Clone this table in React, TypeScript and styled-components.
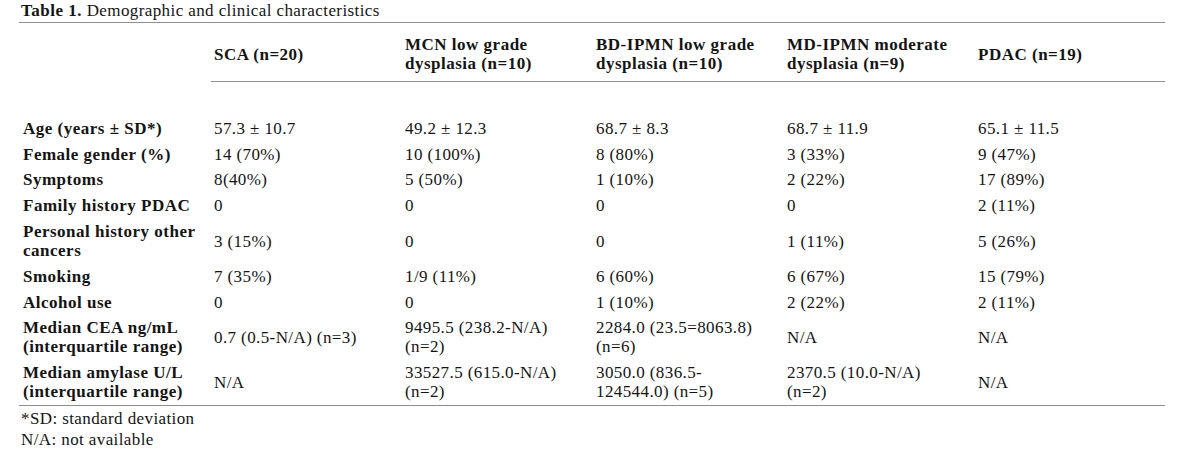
import styled, { createGlobalStyle } from "styled-components";

type CellValue = string | string[];

interface RowType {
  label: CellValue;
  values: CellValue[];
}

const columns: CellValue[] = [
  "SCA (n=20)",
  ["MCN low grade", "dysplasia (n=10)"],
  ["BD-IPMN low grade", "dysplasia (n=10)"],
  ["MD-IPMN moderate", "dysplasia (n=9)"],
  "PDAC (n=19)",
];

const rows: RowType[] = [
  {
    label: "Age (years ± SD*)",
    values: ["57.3 ± 10.7", "49.2 ± 12.3", "68.7 ± 8.3", "68.7 ± 11.9", "65.1 ± 11.5"],
  },
  {
    label: "Female gender (%)",
    values: ["14 (70%)", "10 (100%)", "8 (80%)", "3 (33%)", "9 (47%)"],
  },
  {
    label: "Symptoms",
    values: ["8(40%)", "5 (50%)", "1 (10%)", "2 (22%)", "17 (89%)"],
  },
  {
    label: "Family history PDAC",
    values: ["0", "0", "0", "0", "2 (11%)"],
  },
  {
    label: ["Personal history other", "cancers"],
    values: ["3 (15%)", "0", "0", "1 (11%)", "5 (26%)"],
  },
  {
    label: "Smoking",
    values: ["7 (35%)", "1/9 (11%)", "6 (60%)", "6 (67%)", "15 (79%)"],
  },
  {
    label: "Alcohol use",
    values: ["0", "0", "1 (10%)", "2 (22%)", "2 (11%)"],
  },
  {
    label: ["Median CEA ng/mL", "(interquartile range)"],
    values: [
      "0.7 (0.5-N/A) (n=3)",
      ["9495.5 (238.2-N/A)", "(n=2)"],
      ["2284.0 (23.5=8063.8)", "(n=6)"],
      "N/A",
      "N/A",
    ],
  },
  {
    label: ["Median amylase U/L", "(interquartile range)"],
    values: [
      "N/A",
      ["33527.5 (615.0-N/A)", "(n=2)"],
      ["3050.0 (836.5-", "124544.0) (n=5)"],
      ["2370.5 (10.0-N/A)", "(n=2)"],
      "N/A",
    ],
  },
];

// explicit line breaks keep the wrapping of the original table
const Lines = ({ value }: { value: CellValue }) => {
  if (typeof value === "string") return <>{value}</>;
  return (
    <>
      {value.map((line, i) => (
        <span key={i}>
          {i > 0 && <br />}
          {line}
        </span>
      ))}
    </>
  );
};

const App = () => {
  return (
    <>
      <GlobalStyle />
      <Page>
        <Title>
          <TitleLabel>Table 1.</TitleLabel> Demographic and clinical characteristics
        </Title>
        <Table>
          <colgroup>
            <Col $width={192} />
            <Col $width={191} />
            <Col $width={191} />
            <Col $width={191} />
            <Col $width={191} />
            <Col $width={190} />
          </colgroup>
          <thead>
            <tr>
              <HeadCell $first />
              {columns.map((col, i) => (
                <HeadCell key={i}>
                  <Lines value={col} />
                </HeadCell>
              ))}
            </tr>
          </thead>
          <tbody>
            <SpacerRow>
              <td colSpan={6} />
            </SpacerRow>
            {rows.map((row, i) => (
              <tr key={i}>
                <LabelCell>
                  <Lines value={row.label} />
                </LabelCell>
                {row.values.map((v, j) => (
                  <Cell key={j}>
                    <Lines value={v} />
                  </Cell>
                ))}
              </tr>
            ))}
          </tbody>
        </Table>
        <Notes>
          <Note>*SD: standard deviation</Note>
          <Note>N/A: not available</Note>
        </Notes>
      </Page>
    </>
  );
};

export default App;

const GlobalStyle = createGlobalStyle`
  body {
    margin: 0;
    background-color: #ffffff;
    color: #141414;
    font-family: "Liberation Serif", "Times New Roman", serif;
    font-size: 17px;
  }
`;

const Page = styled.div`
  width: 1146px;
  padding: 1px 0 0 19px;
  letter-spacing: 0.4px;
`;

const Title = styled.div`
  line-height: 19px;
  padding: 0 0 2px 2px;
  border-bottom: 1px solid #8c8c8c;
`;

const TitleLabel = styled.span`
  font-weight: 700;
  letter-spacing: 0.5px;
`;

const Table = styled.table`
  width: 1146px;
  table-layout: fixed;
  border-collapse: collapse;
  border-bottom: 1px solid #8c8c8c;
`;

const Col = styled.col<{ $width: number }>`
  width: ${(p) => p.$width}px;
`;

const HeadCell = styled.th<{ $first?: boolean }>`
  height: 58px;
  padding: 12px 3px 8px 3px;
  box-sizing: border-box;
  text-align: left;
  vertical-align: middle;
  font-weight: 700;
  letter-spacing: 0.5px;
  line-height: 19px;
  border-bottom: ${(p) => (p.$first ? "none" : "1px solid #8c8c8c")};
`;

const SpacerRow = styled.tr`
  height: 34px;

  td {
    padding: 0;
  }
`;

const Cell = styled.td`
  padding: 3.4px 3px;
  line-height: 19px;
  vertical-align: middle;
  white-space: nowrap;
`;

const LabelCell = styled(Cell)`
  padding-left: 4px;
  font-weight: 700;
  letter-spacing: 0.5px;
`;

const Notes = styled.div`
  display: flex;
  flex-direction: column;
  padding: 2px 0 0 2px;
`;

const Note = styled.div`
  line-height: 21.5px;
`;
